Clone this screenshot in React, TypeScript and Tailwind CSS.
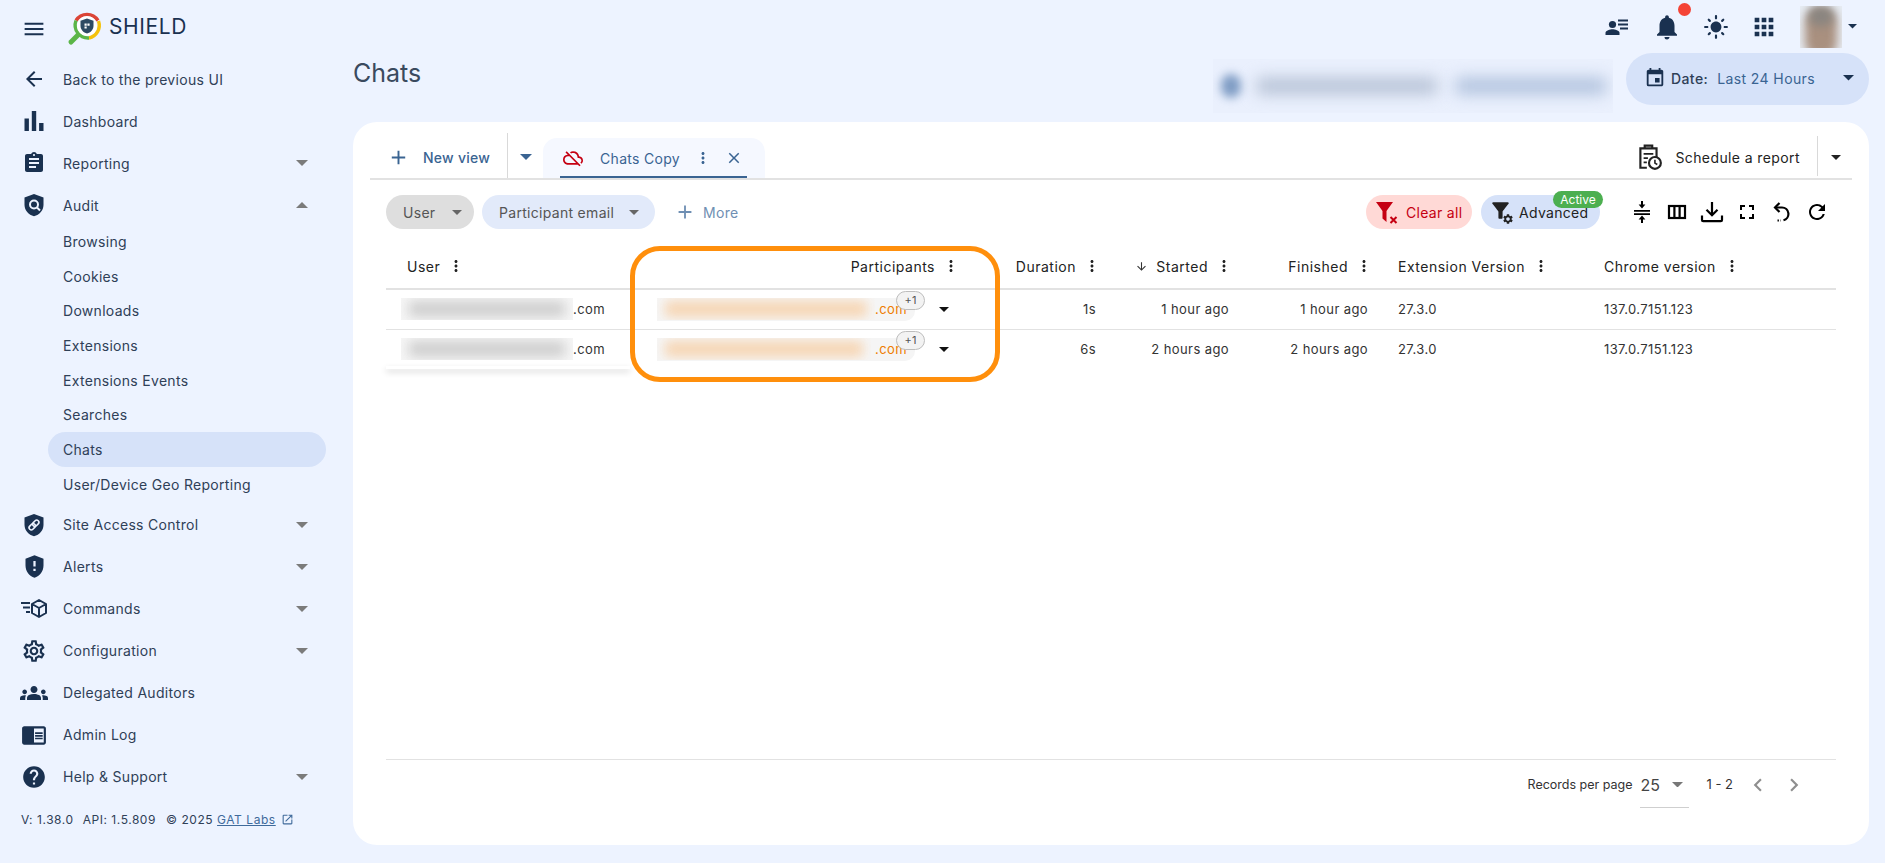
import React from "react";
import {
  MdMenu, MdArrowBack, MdAssignment, MdGppMaybe, MdOutlineSettings, MdGroups,
  MdChromeReaderMode, MdHelp, MdNotifications, MdLightMode, MdApps, MdEvent, MdOutlineCloudOff,
  MdClose, MdAdd, MdMoreVert, MdArrowDownward, MdFullscreen, MdRefresh, MdChevronLeft, MdChevronRight, MdOpenInNew,
  MdFilterAlt, MdSettings,
} from "react-icons/md";

const Caret = ({ c = "text-[#7b7b7b]", up = false, w = 12 }: { c?: string; up?: boolean; w?: number }) => (
  <svg width={w} height={w / 2} viewBox="0 0 12 6" className={c}>
    <path d={up ? "M0 6L6 0l6 6z" : "M0 0l6 6 6-6z"} fill="currentColor" />
  </svg>
);

const ShieldBase = ({ children }: { children?: React.ReactNode }) => (
  <svg width="24" height="24" viewBox="0 0 24 24">
    <path d="M12 1L2.5 4.6v7.2c0 5.6 4 10.2 9.5 11.4 5.5-1.2 9.5-5.8 9.5-11.4V4.6z" fill="#1a3150" />
    {children}
  </svg>
);

const ShieldSearch = () => (
  <ShieldBase>
    <circle cx="12" cy="11.5" r="4" fill="none" stroke="#edf3ff" strokeWidth="2" />
    <path d="M15 14.5l3 3" stroke="#edf3ff" strokeWidth="2" />
  </ShieldBase>
);
const ShieldLink = () => (
  <ShieldBase>
    <g transform="rotate(-45 12 12)" fill="none" stroke="#edf3ff" strokeWidth="1.6">
      <rect x="6" y="9.8" width="7" height="4.4" rx="2.2" />
      <rect x="11" y="9.8" width="7" height="4.4" rx="2.2" />
    </g>
  </ShieldBase>
);
const CommandsIcon = () => (
  <svg width="26" height="24" viewBox="0 0 26 24" fill="none">
    <path d="M0 6h9M2 10.5h7M5 15h4" stroke="#1a3150" strokeWidth="2" />
    <path d="M18 3l7 4v9l-7 4-7-4V7z M11 7l7 4 7-4 M18 11v9" stroke="#1a3150" strokeWidth="2" strokeLinejoin="round" />
  </svg>
);
const PersonList = () => (
  <svg width="24" height="24" viewBox="0 0 24 24" fill="#1a3150">
    <circle cx="7.5" cy="9.5" r="3.6" />
    <path d="M0.5 20v-2.2c0-2.4 4.6-3.6 7-3.6s7 1.2 7 3.6V20z" />
    <path d="M13 4.5h10v1.9H13zM13 8.5h10v1.9H13zM15 12.5h8v1.9h-8z" />
  </svg>
);
const FilterClear = () => (
  <svg width="24" height="24" viewBox="0 0 24 24">
    <path d="M1 2h17l-6.5 9v11l-4-3.5V11z" fill="#c50012" />
    <path d="M15.5 17l6 6M21.5 17l-6 6" stroke="#c50012" strokeWidth="2" />
  </svg>
);
const CollapseIcon = () => (
  <svg width="24" height="24" viewBox="0 0 24 24" fill="#000">
    <path d="M4 10h16v1.8H4zM4 13.2h16V15H4zM11 1h2v3.6h2.4L12 8.4 8.6 4.6H11zM12 15.6l3.4 3.8H13V23h-2v-3.6H8.6z" />
  </svg>
);
const ColumnsIcon = () => (
  <svg width="24" height="24" viewBox="0 0 24 24" fill="none" stroke="#000" strokeWidth="2.2">
    <rect x="4" y="6" width="16" height="12" />
    <path d="M9.4 6v12M14.6 6v12" />
  </svg>
);
const DownloadIcon = () => (
  <svg width="24" height="24" viewBox="0 0 24 24" fill="none" stroke="#000" strokeWidth="2.2">
    <path d="M12 2v13M6.5 9.8l5.5 5.5 5.5-5.5" />
    <path d="M2 15.5v4.5a1.2 1.2 0 0 0 1.2 1.2h17.6a1.2 1.2 0 0 0 1.2-1.2v-4.5" />
  </svg>
);
const UndoIcon = () => (
  <svg width="24" height="24" viewBox="0 0 24 24" fill="none" stroke="#000" strokeWidth="2.2">
    <path d="M9.5 3L5 7.5 9.5 12" />
    <path d="M5 7.5h7a6.5 6.5 0 0 1 1.5 12.8" />
    <path d="M7.5 20.5h3" strokeDasharray="1.4 1.2" />
  </svg>
);
const ScheduleIcon = () => (
  <svg width="28" height="28" viewBox="0 0 26 26" fill="none" stroke="#222" strokeWidth="2">
    <path d="M11 23H5V5h15v8" />
    <path d="M9 5V2.5h7V5" strokeWidth="2" />
    <path d="M8 10h9M8 14h4M8 18h3" strokeWidth="1.6" />
    <circle cx="18.5" cy="18.5" r="5.5" />
    <path d="M18.5 15.5v3.2l2.2 1.3" strokeWidth="1.5" />
  </svg>
);
const Logo = () => (
  <svg width="36" height="36" viewBox="0 0 36 36" fill="none">
    <path d="M11 24L4 31" stroke="#5bb548" strokeWidth="5" strokeLinecap="round" />
    <path d="M9 9.5A13 13 0 0 1 31 9.5" stroke="#db4437" strokeWidth="3.4" />
    <path d="M31.5 10A13 13 0 0 1 22 27" stroke="#f4c20d" strokeWidth="3.4" />
    <path d="M22 27A13 13 0 0 1 9 9.5" stroke="#5bb548" strokeWidth="3.4" />
    <circle cx="20" cy="15" r="10" fill="#fff" />
    <path d="M20 7.5l-6.5 2.2v5c0 3.8 2.8 6.8 6.5 7.8 3.7-1 6.5-4 6.5-7.8v-5z" fill="#2d4a63" />
    <path d="M17.5 12.5h2.2v2.2h-2.2zM20.4 12.5h2.2v2.2h-2.2zM17.5 15.4h2.2v2.2h-2.2z" fill="#fff" />
  </svg>
);

type Nav = { label: string; icon?: React.ReactNode; caret?: "down" | "up"; sub?: boolean; active?: boolean };
const ic = "text-[#1a3150]";
const nav: Nav[] = [
  { label: "Back to the previous UI", icon: <MdArrowBack size={24} className={ic} /> },
  { label: "Dashboard", icon: <svg width="24" height="24" viewBox="0 0 24 24" fill="#1a3150"><path d="M2.5 9.5h4.4V22H2.5zM9.8 2h4.4v20H9.8zM17.1 14h4.4v8h-4.4z" /></svg> },
  { label: "Reporting", icon: <MdAssignment size={24} className={ic} />, caret: "down" },
  { label: "Audit", icon: <ShieldSearch />, caret: "up" },
];
const subs: Nav[] = [
  { label: "Browsing", sub: true },
  { label: "Cookies", sub: true },
  { label: "Downloads", sub: true },
  { label: "Extensions", sub: true },
  { label: "Extensions Events", sub: true },
  { label: "Searches", sub: true },
  { label: "Chats", sub: true, active: true },
  { label: "User/Device Geo Reporting", sub: true },
];
const nav2: Nav[] = [
  { label: "Site Access Control", icon: <ShieldLink />, caret: "down" },
  { label: "Alerts", icon: <MdGppMaybe size={27} className={ic} />, caret: "down" },
  { label: "Commands", icon: <CommandsIcon />, caret: "down" },
  { label: "Configuration", icon: <MdOutlineSettings size={26} className={ic} />, caret: "down" },
  { label: "Delegated Auditors", icon: <MdGroups size={28} className={ic} /> },
  { label: "Admin Log", icon: <MdChromeReaderMode size={26} className={ic} /> },
  { label: "Help & Support", icon: <MdHelp size={26} className={ic} />, caret: "down" },
];

const NavRow = ({ n }: { n: Nav }) =>
  n.sub ? (
    <div className={`ml-12 mr-[27px] h-[34.7px] pl-[15px] flex items-center rounded-full text-[14px] tracking-[0.3px] text-[#2f4057] ${n.active ? "bg-[#d6e2f9]" : ""}`}>
      {n.label}
    </div>
  ) : (
    <div className="h-[42px] flex items-center text-[14px] tracking-[0.3px] text-[#2f4057]">
      <div className="w-[68px] flex justify-center shrink-0">{n.icon}</div>
      <span className="-ml-[5px]">{n.label}</span>
      {n.caret && <span className="ml-auto mr-[45px]"><Caret up={n.caret === "up"} /></span>}
    </div>
  );

const Sidebar = () => (
  <aside className="w-[353px] shrink-0 flex flex-col">
    <div className="h-[58px] flex items-center pl-[24px] pr-4 shrink-0">
      <MdMenu size={20} className="text-[#1a3150] scale-125" />
      <span className="ml-[23px]"><Logo /></span>
      <span className="ml-[6px] text-[21px] tracking-[0.6px] text-[#1a3150] -mt-1">SHIELD</span>
    </div>
    <nav className="flex flex-col">
      {nav.map((n) => <NavRow key={n.label} n={n} />)}
      <div className="-mt-[2px] flex flex-col">
        {subs.map((n) => <NavRow key={n.label} n={n} />)}
      </div>
      <div className="h-[2px]" />
      {nav2.map((n) => <NavRow key={n.label} n={n} />)}
    </nav>
    <div className="mt-[13px] pl-[21px] flex items-center text-[12px] text-[#2f4057] tracking-[0.55px] whitespace-pre">
      <span>V: 1.38.0</span>
      <span className="ml-[9px]">API: 1.5.809</span>
      <span className="ml-[10px]">© 2025 </span>
      <span className="underline text-[#3f6a9b]">GAT Labs</span>
      <MdOpenInNew size={13} className="ml-[5px] text-[#3f6a9b]" />
    </div>
  </aside>
);

const TopRight = () => (
  <div className="h-[53px] flex items-center justify-end gap-[20px] pr-[12px] relative">
    <PersonList />
    <div className="relative ml-[3px]">
      <MdNotifications size={30} className="text-[#1a3150]" />
      <span className="absolute -top-[9px] left-[26px] w-[13px] h-[13px] rounded-full bg-[#f44336]" />
    </div>
    <MdLightMode size={26} className="text-[#1a3150] ml-[1px]" />
    <MdApps size={28} className="text-[#1a3150] ml-[1px]" />
    <div className="flex items-center ml-[2px]">
      <div className="w-[42px] h-[42px] overflow-hidden relative bg-[#e7ecf3]">
        <div className="absolute left-[5px] top-[2px] w-[32px] h-[50px] rounded-full bg-[#a9907f] blur-[5px]" />
        <div className="absolute left-[8px] top-[0px] w-[26px] h-[20px] rounded-full bg-[#8a8580] blur-[5px]" />
      </div>
      <span className="ml-[6px]"><Caret c="text-[#1a3150]" w={9} /></span>
    </div>
  </div>
);

const Kebab = ({ c = "text-[#222]" }: { c?: string }) => <MdMoreVert size={18} className={c} />;

const Tabs = () => (
  <div className="h-[58px] mx-[17px] border-b-2 border-[#e2e2e2] flex items-end">
    <div className="flex items-center h-[45px] pl-[17px] pr-[17px] pt-[3px] border-r border-[#d9d9d9] text-[14px] font-medium tracking-[0.25px] text-[#3a6492] gap-[13px]">
      <MdAdd size={23} className="text-[#3a6492]" />
      <span>New view</span>
    </div>
    <div className="w-[35px] h-[45px] pt-[3px] flex items-center justify-center"><Caret c="text-[#3a6492]" /></div>
    <div className="w-[222px] h-[40px] rounded-t-[14px] bg-[#f5f8ff] pl-[17px] pr-[18px] flex flex-col">
      <div className="flex-1 flex items-center pt-[2px] text-[14px] tracking-[0.3px] text-[#3a6492]">
        <MdOutlineCloudOff size={20} className="ml-[3px] text-[#c50012] shrink-0" />
        <span className="ml-[17px]">Chats Copy</span>
        <span className="ml-[14px]"><Kebab c="text-[#3a6492]" /></span>
        <MdClose size={18} className="ml-[13px] text-[#3a6492]" />
      </div>
      <div className="h-[2px] bg-[#3a6492]" />
    </div>
    <div className="ml-auto flex items-center h-[45px] text-[14px] tracking-[0.4px] text-[#222]">
      <span className="pt-[3px] mr-[2px]"><ScheduleIcon /></span>
      <span className="ml-[10px] pt-[3px]">Schedule a report</span>
      <div className="ml-[17px] h-[40px] border-l border-[#d9d9d9] w-[35px] pt-[3px] flex items-center justify-center pl-[1px]"><Caret c="text-[#222]" w={10} /></div>
    </div>
  </div>
);

const Filters = () => (
  <div className="h-[64px] pl-[33px] pr-[40px] flex items-center">
    <div className="h-[34px] w-[88px] rounded-full bg-[#dedede] flex items-center pl-[17px] text-[14px] tracking-[0.3px] text-[#555]">
      User<span className="ml-[17px]"><Caret c="text-[#666]" w={10} /></span>
    </div>
    <div className="ml-[8px] h-[34px] w-[173px] rounded-full bg-[#e2eafa] flex items-center pl-[17px] text-[14px] tracking-[0.3px] text-[#555]">
      Participant email<span className="ml-[15px]"><Caret c="text-[#666]" w={10} /></span>
    </div>
    <div className="ml-[19px] flex items-center text-[14px] tracking-[0.3px] text-[#6f8fb3] gap-[7px]">
      <MdAdd size={22} className="text-[#6f8fb3]" /><span>More</span>
    </div>
    <div className="ml-auto h-[34px] w-[106px] rounded-full bg-[#ffd9d6] flex items-center pl-[9px] text-[14px] tracking-[0.3px] text-[#c50012] gap-[7px]">
      <FilterClear /><span>Clear all</span>
    </div>
    <div className="relative ml-[9px] h-[34px] w-[119px] rounded-full bg-[#d6e2f9] flex items-center pl-[8px] text-[14px] tracking-[0.3px] text-[#222] gap-[6px]">
      <span className="relative w-[24px] h-[24px] block">
        <MdFilterAlt size={25} className="text-[#222] absolute -left-[1px] -top-[2px]" />
        <MdSettings size={12} className="text-[#222] absolute left-[13px] top-[13px]" />
      </span>
      <span>Advanced</span>
      <span className="absolute -top-[4px] left-[72px] h-[17px] w-[50px] rounded-full bg-[#4caf50] text-white text-[12px] tracking-normal flex items-center justify-center">Active</span>
    </div>
    <div className="ml-[30px] flex items-center gap-[11px] text-black">
      <CollapseIcon />
      <ColumnsIcon />
      <DownloadIcon />
      <MdFullscreen size={24} />
      <UndoIcon />
      <MdRefresh size={24} />
    </div>
  </div>
);

const cols = "grid grid-cols-[245px_369px_112px_133px_137px_206px_248px]";

const Head = ({ label, cls, arrow }: { label: string; cls: string; arrow?: boolean }) => (
  <div className={`flex items-center text-[14px] tracking-[0.5px] text-[#222] ${cls}`}>
    {arrow && <MdArrowDownward size={13} className="mr-[8px] text-[#333]" />}
    <span>{label}</span>
    <span className="ml-[7px]"><Kebab /></span>
  </div>
);

const Redact = ({ w, c }: { w: number; c: string }) => (
  <span className="block h-[22px] overflow-hidden shrink-0 bg-[#f6f6f6]" style={{ width: w }}>
    <span className={`block h-[16px] mt-[3px] mx-[8px] blur-[6px] ${c}`} />
  </span>
);

const Row = ({ last, dur, started, finished, ru, rp }: { last?: boolean; dur: string; started: string; finished: string; ru: number; rp: number }) => (
  <div className={`${cols} h-[39.5px] text-[13px] tracking-[0.4px] text-[#333] ${last ? "" : "border-b border-[#e2e2e2]"}`}>
    <div className="flex items-center pl-[15px]">
      <Redact w={ru} c="bg-[#cfcfcf]" />
      <span>.com</span>
    </div>
    <div className="flex items-center pl-[26px] relative">
      <div className="flex items-center h-[23px] w-[258px] rounded-r-[10px] bg-[#f5f5f5] text-[#ef7d00]">
        <Redact w={rp} c="bg-[#f6d5b3]" />
        <span className="ml-auto mr-[8px]">.com</span>
      </div>
      <span className="absolute left-[265px] top-[1px] w-[29px] h-[19px] rounded-full border border-[#bdbdbd] bg-[#f3f3f3] text-[11px] tracking-normal text-[#555] flex items-center justify-center">+1</span>
      <span className="ml-[24px]"><Caret c="text-[#111]" w={10} /></span>
    </div>
    <div className="flex items-center justify-end pr-[16px]">{dur}</div>
    <div className="flex items-center justify-end pr-[16px]">{started}</div>
    <div className="flex items-center justify-end pr-[14px]">{finished}</div>
    <div className="flex items-center pl-[16px]">27.3.0</div>
    <div className="flex items-center pl-[16px]">137.0.7151.123</div>
  </div>
);

const Table = () => (
  <div className="mx-[33px] relative flex-1 flex flex-col">
    <div className={`${cols} h-[46px] border-b-2 border-[#e2e2e2]`}>
      <Head label="User" cls="pl-[21px]" />
      <Head label="Participants" cls="justify-end pr-[40px]" />
      <Head label="Duration" cls="justify-end pr-[11px]" />
      <Head label="Started" cls="justify-end pr-[12px]" arrow />
      <Head label="Finished" cls="justify-end pr-[9px]" />
      <Head label="Extension Version" cls="pl-[16px]" />
      <Head label="Chrome version" cls="pl-[16px]" />
    </div>
    <Row dur="1s" started="1 hour ago" finished="1 hour ago" ru={172} rp={218} />
    <Row last dur="6s" started="2 hours ago" finished="2 hours ago" ru={172} rp={214} />
    <div className="absolute left-0 top-[122px] w-[244px] h-[3px] bg-white shadow-[0_3px_6px_rgba(0,0,0,0.18)]" />
    <div className="absolute left-[244px] top-[2px] w-[370px] h-[136px] border-[5px] border-[#ff8f0c] rounded-[30px] pointer-events-none" />
    <div className="mt-auto h-[86px] border-t border-[#e2e2e2] flex items-start justify-end pr-[29px] text-[13px] text-[#333]">
      <div className="flex items-center pt-[2px]">
        <span className="text-[12.5px]">Records per page</span>
        <div className="ml-[8px] w-[49px] h-[46px] border-b border-[#cfcfcf] flex items-center justify-between pr-[6px] text-[16px] text-[#444]">
          <span>25</span><Caret c="text-[#777]" w={11} />
        </div>
        <span className="ml-[17px]">1 - 2</span>
        <MdChevronLeft size={26} className="ml-[12px] text-[#8f8f8f]" />
        <MdChevronRight size={26} className="ml-[10px] text-[#8f8f8f]" />
      </div>
    </div>
  </div>
);

export default function App() {
  return (
    <div className="w-[1885px] h-[863px] overflow-hidden bg-[#edf3ff] flex font-['Inter',sans-serif]">
      <Sidebar />
      <main className="flex-1 flex flex-col pr-[16px] pb-[18px] min-w-0">
        <TopRight />
        <div className="h-[69px] flex shrink-0 relative">
          <h1 className="text-[25px] text-[#3a4a5e] mt-[2px] font-normal">Chats</h1>
          <div className="absolute left-[860px] top-[6px] w-[400px] h-[54px] overflow-hidden flex items-center pl-[8px] bg-[#eaf0fd]">
            <span className="w-[20px] h-[24px] rounded-full bg-[#7f9cc4] blur-[5px]" />
            <span className="ml-[16px] w-[180px] h-[16px] bg-[#b4c0d4] blur-[8px]" />
            <span className="ml-[19px] w-[150px] h-[16px] bg-[#aec0dc] blur-[8px]" />
          </div>
          <div className="ml-auto h-[52px] w-[243px] rounded-[26px] bg-[#d6e2f9] flex items-center pl-[18px] pb-[2px] text-[14px] tracking-[0.4px]">
            <MdEvent size={22} className="text-[#1a3150]" />
            <span className="ml-[5px] font-medium text-[#2f4057]">Date:</span>
            <span className="ml-[9px] text-[#3a6492]">Last 24 Hours</span>
            <span className="ml-auto mr-[15px]"><Caret c="text-[#1a3150]" w={11} /></span>
          </div>
        </div>
        <section className="flex-1 bg-white rounded-[24px] flex flex-col min-h-0">
          <Tabs />
          <Filters />
          <Table />
        </section>
      </main>
    </div>
  );
}
